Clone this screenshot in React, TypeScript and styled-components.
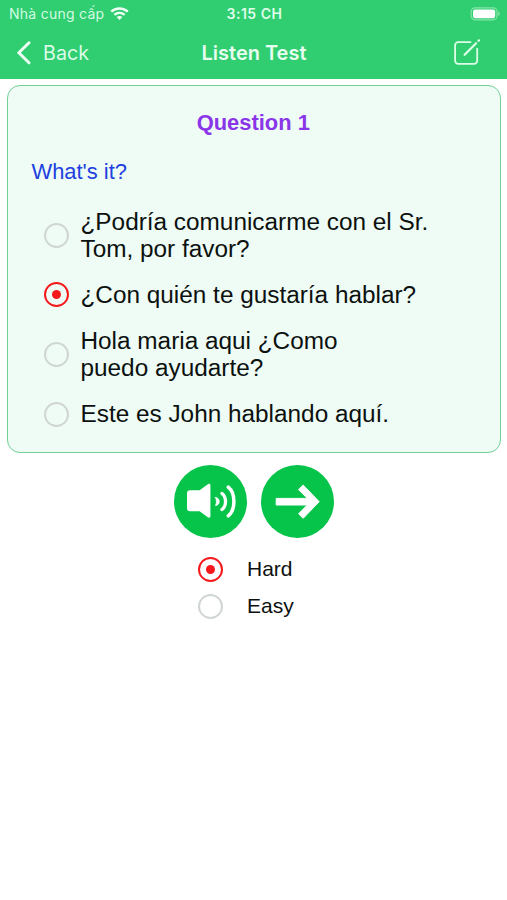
import React, { useState } from "react";
import styled, { createGlobalStyle } from "styled-components";

const GlobalStyle = createGlobalStyle`
  * { box-sizing: border-box; }
  body { margin: 0; background: #fff; }
  button { border: 0; padding: 0; margin: 0; background: none; cursor: pointer; font: inherit; color: inherit; }
`;

const Screen = styled.div`
  width: 100%;
  min-height: 900px;
  display: flex;
  flex-direction: column;
  background: #fff;
  color: #0c110f;
  font-family: "Liberation Sans", Arial, sans-serif;
`;

const Header = styled.header`
  height: 79px;
  background: #30ce70;
  color: #fff;
  font-family: Inter, sans-serif;
`;

const StatusBar = styled.div`
  height: 27px;
  padding: 0 7px 0 9px;
  display: grid;
  grid-template-columns: 1fr auto 1fr;
  align-items: center;
`;

const Carrier = styled.div`
  display: flex;
  align-items: center;
  gap: 6px;
  font-size: 14px;
  letter-spacing: 0.26px;
  color: #d3fbe2;
  white-space: nowrap;
`;

const Clock = styled.div`
  font-size: 14px;
  font-weight: 600;
  letter-spacing: 0.5px;
  color: #dffdea;
`;

const BatterySlot = styled.div`
  display: flex;
  justify-content: flex-end;
`;

const NavBar = styled.nav`
  height: 51px;
  padding: 0 16px;
  display: grid;
  grid-template-columns: 1fr auto 1fr;
  align-items: center;
`;

const BackButton = styled.button`
  display: flex;
  align-items: center;
  gap: 11px;
  font-size: 19.7px;
  line-height: 24px;
  color: #dcfce8;
`;

const Title = styled.h1`
  margin: 0;
  padding-left: 1px;
  font-size: 20px;
  line-height: 24px;
  font-weight: 600;
  color: #e6fdef;
`;

const EditButton = styled.button`
  && {
    justify-self: end;
    display: flex;
    margin-right: 9px;
  }
`;

const Card = styled.section`
  margin: 6px 6px 0 7px;
  height: 368px;
  border: 1.5px solid #71d096;
  border-radius: 13px;
  background: #eefcf5;
  padding: 24px 25px 0 23.5px;
`;

const QuestionNumber = styled.h2`
  margin: 0;
  text-align: center;
  font-size: 21.9px;
  line-height: 26px;
  font-weight: 700;
  color: #8a35e8;
`;

const Prompt = styled.p`
  margin: 23px 0 0;
  font-size: 21.9px;
  line-height: 26px;
  color: #213fe0;
`;

const Options = styled.div`
  display: flex;
  flex-direction: column;
  gap: 18.3px;
  margin: 22.9px 0 0 12px;
`;

const Option = styled.button<{ $small?: boolean }>`
  display: flex;
  align-items: center;
  gap: ${(p) => (p.$small ? 24 : 12)}px;
  font-size: ${(p) => (p.$small ? 21 : 24.35)}px;
  line-height: ${(p) => (p.$small ? 26 : 27.5)}px;
  text-align: left;
`;

const OptionText = styled.span`
  max-width: 362px;
  white-space: pre-line;
`;

const Radio = styled.span<{ $checked: boolean }>`
  flex: none;
  width: 25px;
  height: 25px;
  border-radius: 50%;
  border: 2px solid ${(p) => (p.$checked ? "#f5191d" : "#d0d6d3")};
  display: grid;
  place-items: center;

  &::after {
    content: "";
    width: 9px;
    height: 9px;
    border-radius: 50%;
    background: ${(p) => (p.$checked ? "#f5191d" : "transparent")};
  }
`;

const Actions = styled.div`
  display: flex;
  justify-content: center;
  gap: 14px;
  margin: 12px 0 0 1px;
`;

const RoundButton = styled.button`
  width: 73px;
  height: 73px;
  border-radius: 50%;
  background: #06c34a;
`;

const Levels = styled.div`
  display: flex;
  flex-direction: column;
  gap: 11px;
  margin: 18px 0 0 198px;
`;

const Glyph = styled.svg`
  display: block;
`;

const WifiIcon = () => (
  <svg width="19" height="14" viewBox="0 0 19 14" fill="none" stroke="#effff5">
    <path d="M1.2 4.6C5.8.3 13.2.3 17.8 4.6" strokeWidth="2.5" />
    <path d="M4.3 7.8c2.9-2.7 7.5-2.7 10.4 0" strokeWidth="2.3" />
    <path d="M6.6 10.1c1.7-1.5 4.1-1.5 5.8 0L9.5 13z" fill="#effff5" stroke="none" />
  </svg>
);

const BatteryIcon = () => (
  <svg width="30" height="14" viewBox="0 0 30 14">
    <rect x="1.2" y="0.8" width="25.8" height="12" rx="3.8" fill="none" stroke="#85e5aa" strokeWidth="1.2" />
    <rect x="3" y="2.4" width="22.2" height="8.9" rx="2.2" fill="#fff" />
    <path d="M28.2 4.6c2 .7 2 3.7 0 4.4z" fill="#85e5aa" />
  </svg>
);

const ChevronIcon = () => (
  <svg width="16" height="24" viewBox="0 0 16 24" fill="none" stroke="#effff5" strokeWidth="3" strokeLinecap="round" strokeLinejoin="round">
    <path d="M13 1.8 2.8 11.8 13 21.8" />
  </svg>
);

const EditIcon = () => (
  <svg width="29" height="28" viewBox="0 0 29 28" fill="none" stroke="#dcfce8" strokeWidth="1.8" strokeLinecap="round" strokeLinejoin="round">
    <path d="M17.5 3.2H5.2A3.1 3.1 0 0 0 2.1 6.3v15.4a3.1 3.1 0 0 0 3.1 3.1h15.9a3.1 3.1 0 0 0 3.1-3.1V9.7" />
    <path d="M11.6 15.8 23.1 4.3" strokeWidth="2.3" />
    <path d="m25.6 1.7.3-.3" strokeWidth="2.4" />
  </svg>
);

const SpeakerIcon = () => (
  <Glyph width="73" height="73" viewBox="0 0 73 73" fill="none" stroke="#fff" strokeLinecap="round">
    <path d="M16 25.3h9.6l8.6-6.2c.9-.6 2.2-.2 2.2.9v31.6c0 1.1-1.3 1.5-2.2.9l-8.6-6.3H16a3 3 0 0 1-3-3V28.3a3 3 0 0 1 3-3z" fill="#fff" stroke="none" />
    <path d="M41.5 32.4c5 .2 5 7.9 0 8.1 1.3-2.2 1.3-5.9 0-8.1z" fill="#fff" strokeWidth="0.8" />
    <path d="M48 28.5c4.7 3.7 4.7 12.3 0 16" strokeWidth="3.3" />
    <path d="M54.3 22.2c7.5 6.1 7.5 22.5 0 28.6" strokeWidth="3.5" />
  </Glyph>
);

const ArrowIcon = () => (
  <Glyph width="73" height="73" viewBox="0 0 73 73" fill="#fff" stroke="#fff" strokeWidth="1" strokeLinejoin="round">
    <path d="M15.2 33.4H46.3L37.5 24.6 42.2 20.1 58.2 36.7 42.2 53.3 37.5 48.8 46.3 40H15.2z" />
  </Glyph>
);

const answers = [
  "¿Podría comunicarme con el Sr.\nTom, por favor?",
  "¿Con quién te gustaría hablar?",
  "Hola maria aqui ¿Como\npuedo ayudarte?",
  "Este es John hablando aquí.",
];

const levels = ["Hard", "Easy"];

export default function App() {
  const [answer, setAnswer] = useState(1);
  const [level, setLevel] = useState(0);

  return (
    <Screen>
      <GlobalStyle />
      <Header>
        <StatusBar>
          <Carrier>
            Nhà cung cấp
            <WifiIcon />
          </Carrier>
          <Clock>3:15 CH</Clock>
          <BatterySlot>
            <BatteryIcon />
          </BatterySlot>
        </StatusBar>
        <NavBar>
          <BackButton>
            <ChevronIcon />
            Back
          </BackButton>
          <Title>Listen Test</Title>
          <EditButton aria-label="Edit">
            <EditIcon />
          </EditButton>
        </NavBar>
      </Header>
      <Card>
        <QuestionNumber>Question 1</QuestionNumber>
        <Prompt>What's it?</Prompt>
        <Options role="radiogroup">
          {answers.map((text, i) => (
            <Option key={text} role="radio" aria-checked={answer === i} onClick={() => setAnswer(i)}>
              <Radio $checked={answer === i} />
              <OptionText>{text}</OptionText>
            </Option>
          ))}
        </Options>
      </Card>
      <Actions>
        <RoundButton aria-label="Play sound">
          <SpeakerIcon />
        </RoundButton>
        <RoundButton aria-label="Next question">
          <ArrowIcon />
        </RoundButton>
      </Actions>
      <Levels role="radiogroup">
        {levels.map((text, i) => (
          <Option key={text} $small role="radio" aria-checked={level === i} onClick={() => setLevel(i)}>
            <Radio $checked={level === i} />
            <OptionText>{text}</OptionText>
          </Option>
        ))}
      </Levels>
    </Screen>
  );
}
